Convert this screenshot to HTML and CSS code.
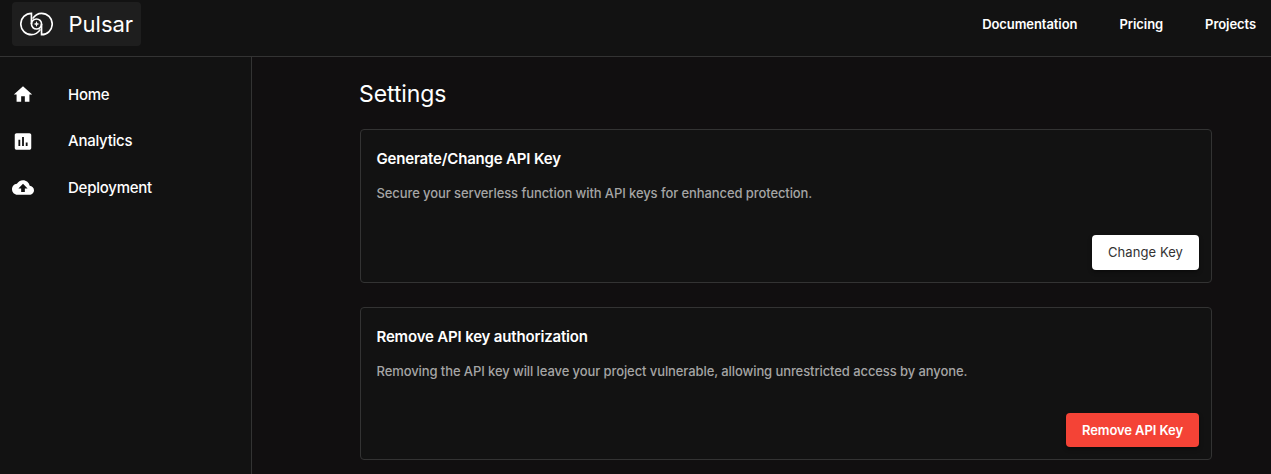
FILE: index.html
```html
<!DOCTYPE html>
<html lang="en">
<head>
<meta charset="utf-8">
<title>Pulsar</title>
<link rel="stylesheet" href="styles.css">
</head>
<body>
<header class="topbar">
  <a class="brand">
    <svg class="logo" viewBox="0 0 34 24" fill="none" stroke="#fff" stroke-width="1.700">
      <path d="M11.800 12V1A11 11 0 0 0 11.800 23C16 23 19 20.500 21 17.500"/>
      <path d="M22.200 12V23A11 11 0 0 0 22.200 1C18 1 15 3.500 13 6.500"/>
      <circle cx="17" cy="12" r="5.200"/>
      <path fill="#fff" stroke="none" d="M17 9l.9 2.100L20 12l-2.100.9L17 15l-.9-2.100L14 12l2.100-.9z"/>
    </svg>
    <span class="brand-name">Pulsar</span>
  </a>
  <nav class="links"><a>Documentation</a><a>Pricing</a><a>Projects</a></nav>
</header>
<div class="body">
  <aside class="sidebar">
    <a class="item"><svg class="icon" viewBox="0 0 24 24"><path d="M10 20v-6h4v6h5v-8h3L12 3 2 12h3v8z"/></svg><span>Home</span></a>
    <a class="item"><svg class="icon" viewBox="0 0 24 24"><path d="M19 3H5c-1.100 0-2 .9-2 2v14c0 1.100.9 2 2 2h14c1.100 0 2-.9 2-2V5c0-1.100-.9-2-2-2zM9 17H7v-7h2v7zm4 0h-2V7h2v10zm4 0h-2v-4h2v4z"/></svg><span>Analytics</span></a>
    <a class="item"><svg class="icon" viewBox="0 0 24 24"><path d="M19.350 10.040C18.670 6.590 15.640 4 12 4 9.110 4 6.600 5.640 5.350 8.040 2.340 8.360 0 10.910 0 14c0 3.310 2.690 6 6 6h13c2.760 0 5-2.240 5-5 0-2.640-2.050-4.780-4.650-4.960zM14 13v4h-4v-4H7l5-5 5 5h-3z"/></svg><span>Deployment</span></a>
  </aside>
  <main class="content">
    <h1>Settings</h1>
    <section class="card">
      <h2>Generate/Change API Key</h2>
      <p>Secure your serverless function with API keys for enhanced protection.</p>
      <button class="btn">Change Key</button>
    </section>
    <section class="card compact">
      <h2>Remove API key authorization</h2>
      <p>Removing the API key will leave your project vulnerable, allowing unrestricted access by anyone.</p>
      <button class="btn danger">Remove API Key</button>
    </section>
  </main>
</div>
</body>
</html>
```
FILE: styles.css
```css
* { box-sizing: border-box; }
body {
  margin: 0;
  height: 474px;
  overflow: hidden;
  display: flex;
  flex-direction: column;
  background: #110f10;
  color: #fff;
  font-family: Inter, "Liberation Sans", sans-serif;
}
.topbar {
  flex: none;
  height: 57px;
  padding: 2px 15px 0 12px;
  display: flex;
  justify-content: space-between;
  background: #121212;
  border-bottom: 1px solid #333;
}
.brand {
  width: 129px;
  height: 44px;
  padding-left: 8px;
  display: flex;
  align-items: center;
  background: #1e1e1e;
  border-radius: 4px;
}
.logo { width: 33px; height: 24px; }
.brand-name { margin-left: 15.5px; font-size: 22px; line-height: 30px; }
.links {
  height: 44px;
  display: flex;
  align-items: center;
  gap: 42px;
  font-size: 13px;
  font-weight: 600;
  letter-spacing: -0.07px;
}
.body { flex: 1; min-height: 0; display: flex; }
.sidebar {
  width: 252px;
  padding: 14px 12px;
  background: #121212;
  border-right: 1px solid #333;
}
.item {
  height: 46.5px;
  display: flex;
  align-items: center;
  gap: 34px;
  font-size: 15px;
  font-weight: 500;
  letter-spacing: -0.24px;
}
.icon { width: 22px; height: 23px; margin-top: 1px; fill: #fff; }
.content { flex: 1; padding: 22px 59px 0 108px; }
h1 { margin: 0 0 20px -1px; font-size: 23px; line-height: 30px; font-weight: 400; letter-spacing: -0.08px; }
.card {
  height: 154px;
  margin-bottom: 24px;
  padding: 19px 12px 12px 15.5px;
  display: flex;
  flex-direction: column;
  background: #121212;
  border: 1px solid #333;
  border-radius: 4px;
}
.compact { height: 153px; }
h2 { margin: 0; font-size: 15px; line-height: 20px; font-weight: 600; letter-spacing: -0.17px; }
p { margin: 14px 0 0; font-size: 13px; line-height: 20px; font-weight: 500; letter-spacing: -0.09px; color: #a5a5a5; }
.btn {
  margin-top: auto;
  align-self: flex-end;
  height: 35px;
  padding: 0 16px 1px;
  border: 0;
  border-radius: 4px;
  background: #fff;
  color: #333;
  font: 400 13px Inter, sans-serif;
  letter-spacing: 0.08px;
  box-shadow: 0 2px 4px #0006;
}
.danger { height: 34px; background: #f44336; color: #fff; font-weight: 600; letter-spacing: -0.08px; }
```
